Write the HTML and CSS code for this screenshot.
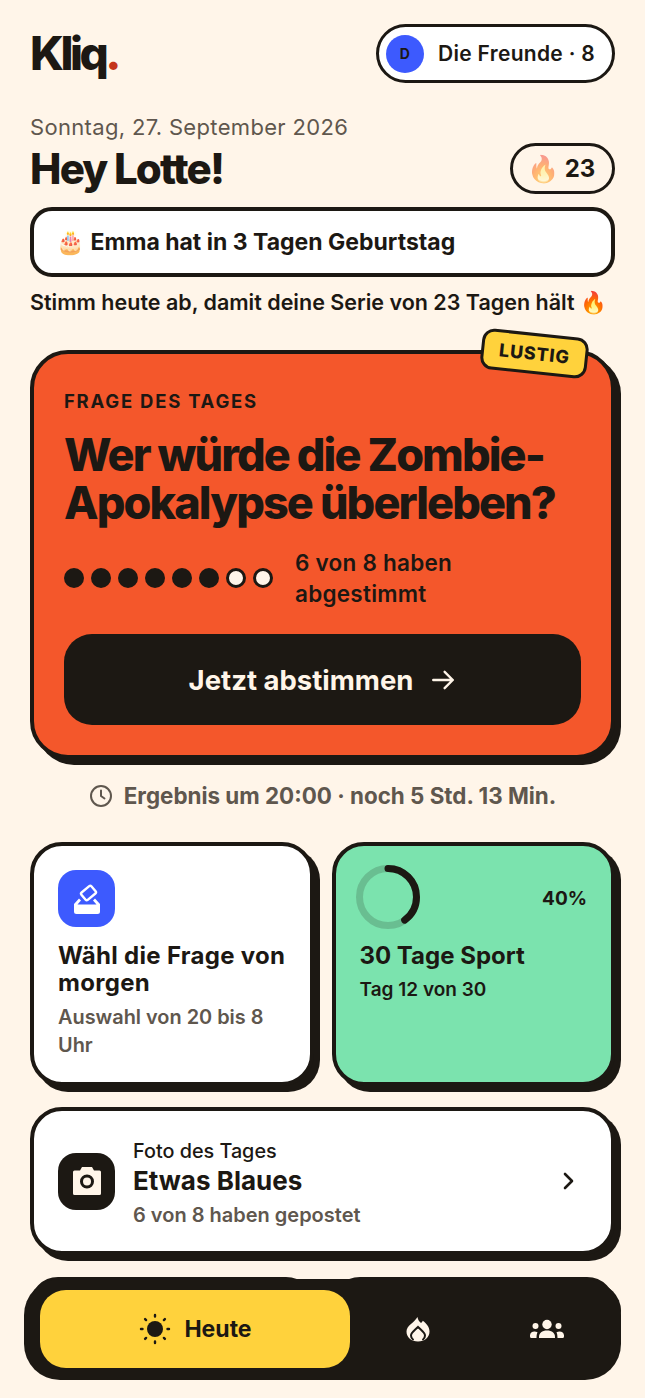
FILE: index.html
```html
<!DOCTYPE html>
<html lang="de">
<head>
  <meta charset="UTF-8">
  <meta name="viewport" content="width=device-width, initial-scale=1.0">
  <title>Kliq</title>
  <link rel="stylesheet" href="styles.css">
</head>
<body>
  <div class="page">
    <!-- Header -->
    <header class="top">
      <div class="logo">Kliq<span class="logo-dot">.</span></div>
      <div class="group-pill">
        <span class="avatar">D</span>
        <span>Die Freunde · 8</span>
      </div>
    </header>

    <p class="date">Sonntag, 27. September 2026</p>
    <div class="greeting">
      <h1>Hey Lotte!</h1>
      <div class="streak"><span class="streak-fire">🔥</span> 23</div>
    </div>

    <div class="banner">🎂 Emma hat in 3 Tagen Geburtstag</div>
    <p class="nudge">Stimm heute ab, damit deine Serie von 23 Tagen hält 🔥</p>

    <!-- Question of the day -->
    <section class="hero">
      <span class="tag">LUSTIG</span>
      <div class="eyebrow">FRAGE DES TAGES</div>
      <h2>Wer würde die Zombie-Apokalypse überleben?</h2>
      <div class="votes">
        <div class="dots">
          <i></i><i></i><i></i><i></i><i></i><i></i><i class="open"></i><i class="open"></i>
        </div>
        <span class="votes-text">6 von 8 haben abgestimmt</span>
      </div>
      <button class="vote-btn">
        Jetzt abstimmen
        <svg width="26" height="26" viewBox="0 0 24 24" fill="none" stroke="currentColor" stroke-width="2.2" stroke-linecap="round" stroke-linejoin="round"><path d="M3 12h18M13.5 4.5 21 12l-7.5 7.5"/></svg>
      </button>
    </section>

    <p class="result">
      <svg width="24" height="24" viewBox="0 0 24 24" fill="none" stroke="currentColor" stroke-width="2" stroke-linecap="round" stroke-linejoin="round"><circle cx="12" cy="12" r="10"/><path d="M12 6.5V12l3.500 2.500"/></svg>
      Ergebnis um 20:00 · noch 5 Std. 13 Min.
    </p>

    <!-- Small cards -->
    <div class="cards">
      <div class="card">
        <div class="icon-box blue">
          <svg width="34" height="34" viewBox="0 0 34 34">
            <rect x="-6.500" y="-4.800" width="13" height="9.600" rx="1.500" transform="translate(18.500 11) rotate(-40)" fill="none" stroke="#fff" stroke-width="2.400"/>
            <path d="M9 16.500 11 18.500 7.500 22.500h19L23 18.500l2-2 5 5.500v7.500a2.500 2.500 0 0 1-2.500 2.500H6.500A2.500 2.500 0 0 1 4 29.500V22z" fill="#fff"/>
          </svg>
        </div>
        <h3>Wähl die Frage von morgen</h3>
        <p class="card-sub">Auswahl von 20 bis 8 Uhr</p>
      </div>
      <div class="card green">
        <div class="ring-row">
          <svg class="ring" width="72" height="72" viewBox="0 0 72 72" fill="none" stroke-width="7">
            <circle cx="36" cy="36" r="28.500" stroke="#1c1813" stroke-opacity=".18"/>
            <circle cx="36" cy="36" r="28.500" stroke="#1c1813" stroke-linecap="round" stroke-dasharray="71.600 179" transform="rotate(-90 36 36)"/>
          </svg>
          <span class="percent">40%</span>
        </div>
        <h3>30 Tage Sport</h3>
        <p class="card-sub dark">Tag 12 von 30</p>
      </div>
    </div>

    <!-- Photo of the day -->
    <div class="card photo">
      <div class="icon-box black">
        <svg width="30" height="30" viewBox="0 0 30 30"><path fill-rule="evenodd" fill="#fff5e9" d="M10 1h10l2 3.500h5.500A1.500 1.500 0 0 1 29 6v21.500a1.500 1.500 0 0 1-1.500 1.500h-25A1.500 1.500 0 0 1 1 27.500V6a1.500 1.500 0 0 1 1.500-1.500H8zM15 8.500a7 7 0 1 0 0 14 7 7 0 0 0 0-14zm0 3a4 4 0 1 1 0 8 4 4 0 0 1 0-8z"/></svg>
      </div>
      <div class="photo-text">
        <div class="photo-label">Foto des Tages</div>
        <div class="photo-title">Etwas Blaues</div>
        <div class="photo-sub">6 von 8 haben gepostet</div>
      </div>
      <svg class="chevron" width="12" height="18" viewBox="0 0 12 18" fill="none" stroke="#1c1813" stroke-width="2.600" stroke-linecap="round" stroke-linejoin="round"><path d="M2 2l7 7-7 7"/></svg>
    </div>

    <!-- Next row, mostly hidden by the tab bar -->
    <div class="cards peek">
      <div class="card"></div>
      <div class="card"></div>
    </div>
  </div>

  <!-- Tab bar -->
  <nav class="tabbar">
    <a class="tab active">
      <svg width="34" height="34" viewBox="0 0 34 34" fill="#1c1813"><circle cx="17" cy="17" r="8"/><g stroke="#1c1813" stroke-width="2.400" stroke-linecap="round"><path d="M17 3v1.500M17 29.500V31M3 17h1.500M29.500 17H31M7.100 7.100l1 1M25.900 25.900l1 1M7.100 26.900l1-1M25.900 8.100l1-1"/></g></svg>
      Heute
    </a>
    <a class="tab tab-fire">
      <svg width="24" height="26" viewBox="0 0 24 26">
        <path fill="#fff5e9" d="M11.500 1c.5 3 1.500 4.500 3.500 6 .8-.6 1.400-1.300 1.800-2.200C20.500 7.500 23.500 11 23.500 15.500c0 6-5 10-11.500 10S.5 21.500.5 15.500C.5 9.500 8 7 11.500 1z"/>
        <path fill="none" stroke="#1c1813" stroke-width="2" stroke-linecap="round" d="M7 23.500c-1.500-1-2-2.500-2-4 0-3 3.500-5 7-8.500 3.500 3.500 7 5.500 7 8.500 0 1.500-.5 3-2 4"/>
      </svg>
    </a>
    <a class="tab">
      <svg width="36" height="20" viewBox="0 0 36 20" fill="#fff5e9"><circle cx="18" cy="5.500" r="4.700"/><circle cx="6.500" cy="7" r="3"/><circle cx="29.500" cy="7" r="3"/><path d="M10 18c0-4 3-6.500 8-6.500s8 2.500 8 6.500v1H10z"/><path d="M1 16.500c0-2.500 2-4 4.500-4 1 0 2 .2 3 .7-.7 1.500-1 3.500-1 5.800H2.500A1.500 1.500 0 0 1 1 17.500zM35 16.500c0-2.500-2-4-4.500-4-1 0-2 .2-3 .7.7 1.500 1 3.500 1 5.800h5a1.500 1.500 0 0 0 1.500-1.500z"/></svg>
    </a>
  </nav>
</body>
</html>
```

FILE: styles.css
```css
* {
  box-sizing: border-box;
}

html, body {
  height: 100%;
}

body {
  margin: 0;
  background: #fff5e9;
  color: #1c1813;
  font-family: Inter, "Noto Sans", sans-serif;
  overflow: hidden;
}

p, h1, h2, h3 {
  margin: 0;
}

.page {
  padding: 24px 30px 0;
}

.top {
  display: flex;
  justify-content: space-between;
  align-items: center;
}

.logo {
  font-size: 46px;
  font-weight: 800;
  letter-spacing: -3.500px;
  line-height: 59px;
}

.logo-dot {
  color: #c5341b;
}

.group-pill {
  display: flex;
  align-items: center;
  gap: 14px;
  width: 239px;
  height: 59px;
  padding-left: 7px;
  background: #fff;
  border: 3px solid #1c1813;
  border-radius: 30px;
  font-size: 21px;
  font-weight: 600;
  letter-spacing: 0.3px;
}

.avatar {
  display: flex;
  justify-content: center;
  align-items: center;
  width: 38px;
  height: 38px;
  background: #3d5afe;
  border-radius: 50%;
  font-size: 14px;
  font-weight: 700;
}

.date {
  margin-top: 30px;
  color: #5f574e;
  font-size: 22px;
  letter-spacing: 0.33px;
  line-height: 28px;
}

.greeting {
  display: flex;
  justify-content: space-between;
  align-items: center;
  margin-top: 2px;
}

h1 {
  font-size: 42px;
  font-weight: 800;
  letter-spacing: -1.800px;
  line-height: 51px;
}

.streak {
  display: flex;
  justify-content: center;
  align-items: center;
  gap: 6px;
  width: 105px;
  height: 51px;
  padding-right: 3px;
  background: #fff5e9;
  border: 3px solid #1c1813;
  border-radius: 26px;
  font-size: 24px;
  font-weight: 700;
}

.streak-fire {
  font-size: 26px;
  opacity: .5;
}

.banner {
  display: flex;
  align-items: center;
  height: 70px;
  margin-top: 13px;
  padding-left: 22px;
  background: #fff;
  border: 4px solid #1c1813;
  border-radius: 22px;
  font-size: 23px;
  font-weight: 700;
}

.nudge {
  margin-top: 11px;
  font-size: 21.500px;
  font-weight: 600;
  line-height: 28px;
}

.hero {
  position: relative;
  height: 409px;
  margin-top: 34px;
  padding: 35px 30px 0;
  background: #f4572b;
  border: 4px solid #1c1813;
  border-radius: 38px;
  box-shadow: 6px 6px 0 #1c1813;
}

.tag {
  position: absolute;
  top: -21px;
  right: 23px;
  padding: 7px 15px;
  background: #ffd23c;
  border: 3px solid #1c1813;
  border-radius: 12px;
  font-size: 18px;
  font-weight: 800;
  letter-spacing: 0.8px;
  transform: rotate(6deg);
}

.eyebrow {
  font-size: 18.500px;
  font-weight: 700;
  letter-spacing: 1.750px;
  line-height: 24px;
}

h2 {
  margin-top: 18px;
  font-size: 45px;
  font-weight: 800;
  letter-spacing: -1.900px;
  line-height: 48px;
}

.votes {
  display: flex;
  align-items: center;
  gap: 22px;
  margin-top: 20px;
}

.dots {
  display: flex;
  gap: 7px;
}

.dots i {
  width: 20px;
  height: 20px;
  background: #1c1813;
  border-radius: 50%;
}

.dots i.open {
  background: #fff5e9;
  border: 3px solid #1c1813;
}

.votes-text {
  width: 180px;
  font-size: 22.500px;
  font-weight: 600;
  letter-spacing: 0.25px;
  line-height: 31px;
}

.vote-btn {
  display: flex;
  justify-content: center;
  align-items: center;
  gap: 17px;
  width: 100%;
  height: 91px;
  margin-top: 25px;
  background: #1c1813;
  color: #fff5e9;
  border: none;
  border-radius: 28px;
  font-family: inherit;
  font-size: 27.500px;
  font-weight: 700;
}

.result {
  display: flex;
  justify-content: center;
  align-items: center;
  gap: 11px;
  margin-top: 21px;
  color: #5f574e;
  font-size: 22.400px;
  font-weight: 700;
  line-height: 32px;
}

.cards {
  display: grid;
  grid-template-columns: 1fr 1fr;
  gap: 18px;
  margin-top: 30px;
}

.card {
  height: 244px;
  padding: 24px;
  background: #fff;
  border: 4px solid #1c1813;
  border-radius: 32px;
  box-shadow: 6px 6px 0 #1c1813;
}

.card.green {
  background: #7be3ae;
}

.peek {
  margin-top: 22px;
}

.peek .card {
  height: 40px;
}

.icon-box {
  display: flex;
  justify-content: center;
  align-items: center;
  flex: none;
  width: 57px;
  height: 57px;
  border-radius: 18px;
}

.blue {
  background: #3d5afe;
}

.black {
  background: #1c1813;
}

h3 {
  margin-top: 15px;
  font-size: 24px;
  font-weight: 700;
  letter-spacing: 0.3px;
  line-height: 27px;
}

.green h3 {
  letter-spacing: 0;
}

.card-sub {
  margin-top: 7px;
  color: #5f574e;
  font-size: 19.900px;
  font-weight: 600;
  line-height: 28px;
}

.card-sub.dark {
  color: #1c1813;
  font-size: 19px;
}

.ring-row {
  display: flex;
  justify-content: space-between;
  align-items: center;
  height: 57px;
}

.ring {
  margin: -4px 0 0 -8px;
}

.percent {
  font-size: 19px;
  font-weight: 700;
}

.photo {
  display: flex;
  align-items: center;
  gap: 18px;
  height: 148px;
  margin-top: 21px;
}

.photo-text {
  flex: 1;
  padding-top: 7px;
}

.photo-label {
  font-size: 19.800px;
  font-weight: 500;
  line-height: 26px;
}

.photo-title {
  font-size: 26px;
  font-weight: 700;
  line-height: 34px;
}

.photo-sub {
  color: #5f574e;
  font-size: 20px;
  font-weight: 600;
  line-height: 34px;
}

.chevron {
  margin-right: 12px;
}

.tabbar {
  position: fixed;
  left: 24px;
  right: 24px;
  bottom: 18px;
  display: flex;
  align-items: center;
  height: 101px;
  padding: 0 10px 2px 16px;
  background: #1c1813;
  border-radius: 36px;
}

.tab {
  display: flex;
  justify-content: center;
  align-items: center;
  flex: 1;
  height: 78px;
}

.tab-fire {
  padding-left: 3px;
}

.tab.active {
  flex: none;
  gap: 12px;
  width: 310px;
  background: #ffd23c;
  border-radius: 26px;
  font-size: 23px;
  font-weight: 700;
}
```
